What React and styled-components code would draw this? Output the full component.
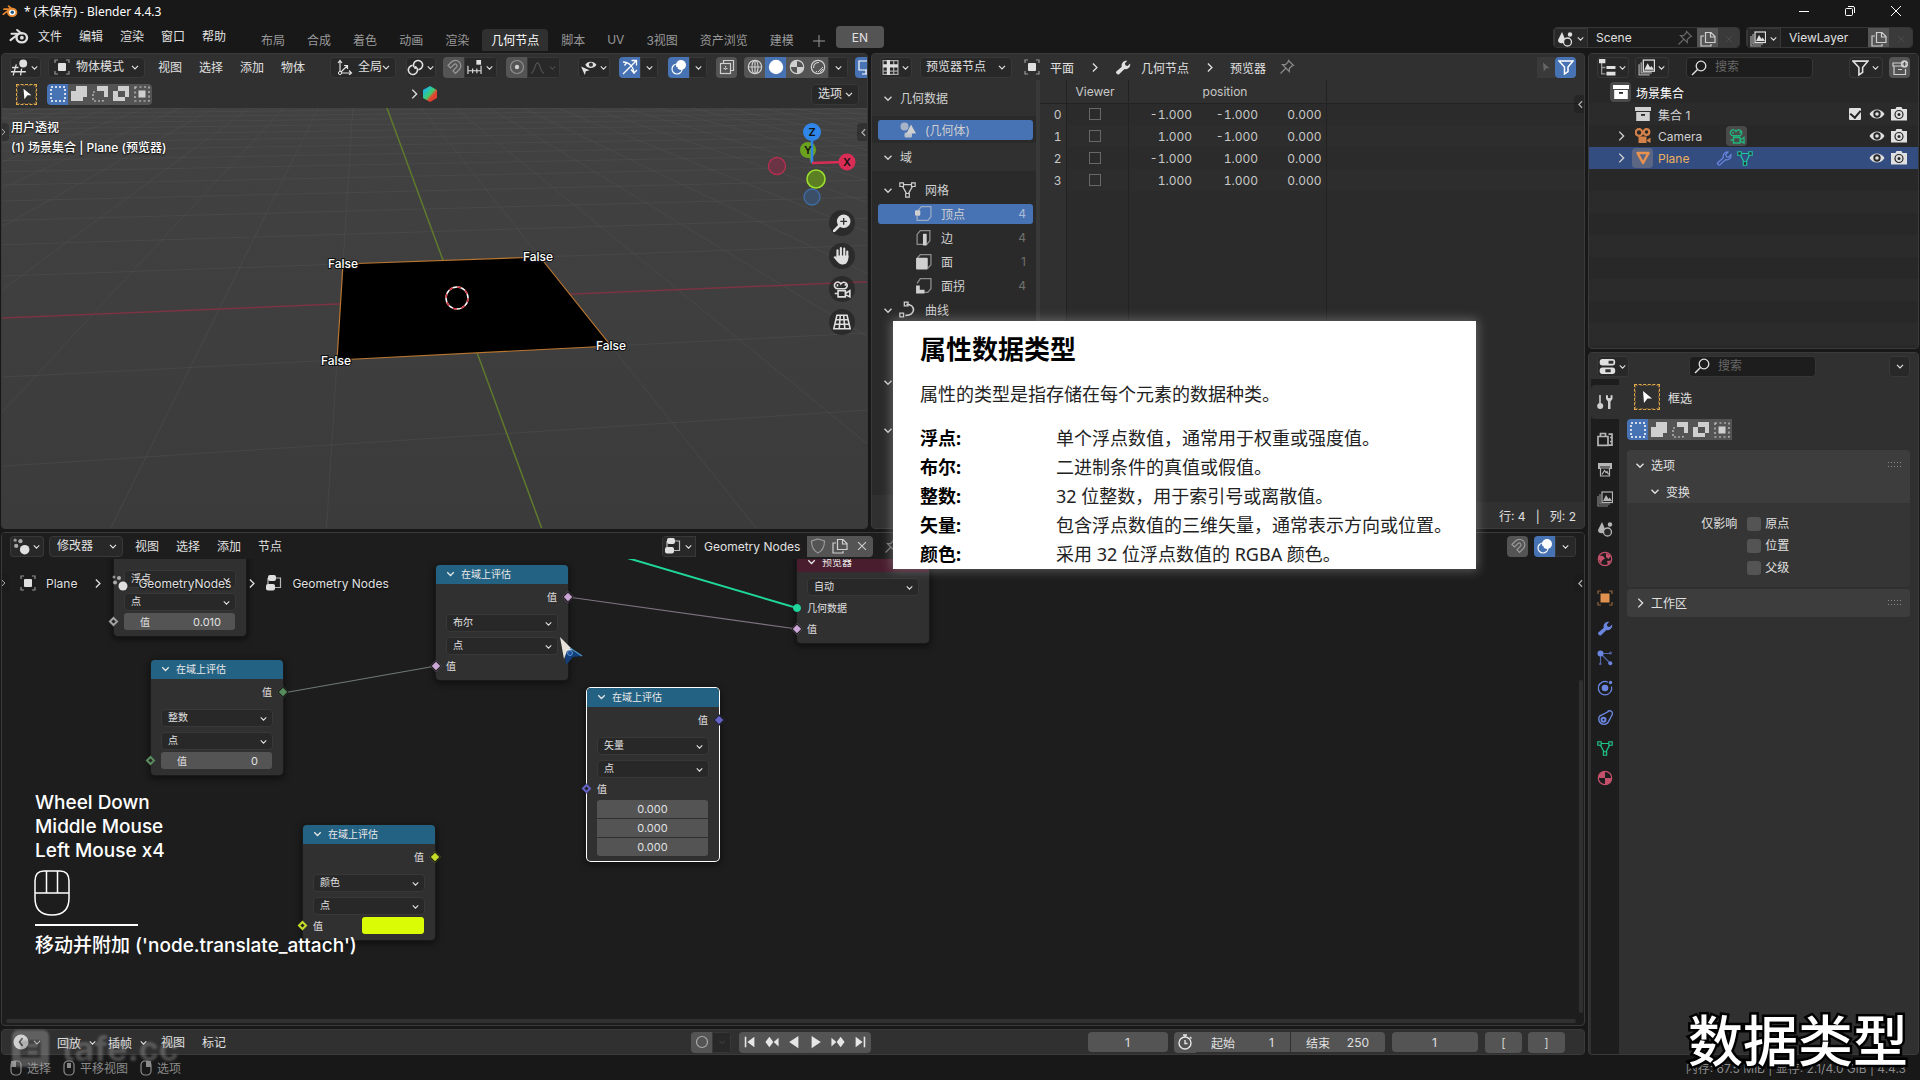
import React, { useState } from "react";
import styled, { createGlobalStyle, css } from "styled-components";

const GlobalStyle = createGlobalStyle`
    * { box-sizing: border-box; }
    body {
        margin: 0;
        background: #181818;
        overflow: hidden;
    }
    body, button, input, select {
        font-family: Inter, "Noto Sans CJK SC", sans-serif;
        font-size: 12px;
        color: #e0e0e0;
    }
`;

const box = { fill: "none", stroke: "currentColor", strokeWidth: 1.2 };

const icons = {
    down: <path d="M4 6.5l4 4 4-4" {...box} strokeWidth="1.6" />,
    right: <path d="M6 3l5 5-5 5" {...box} strokeWidth="1.6" />,
    left: <path d="M10 4L6 8l4 4" {...box} strokeWidth="1.5" />,
    blender: <>
        <path d="M6.5 3.2L10 6M2 6.2h6M1.2 11.3L7 6.8" {...box} strokeWidth="1.7" strokeLinecap="round" />
        <ellipse cx="10.2" cy="9.4" rx="4.2" ry="3.7" {...box} strokeWidth="1.9" />
        <circle cx="10.3" cy="9.3" r="1.5" fill="currentColor" />
    </>,
    blenderColor: <>
        <path d="M6.5 3.2L10 6M2 6.2h6M1.2 11.3L7 6.8" {...box} strokeWidth="1.7" strokeLinecap="round" />
        <ellipse cx="10.2" cy="9.4" rx="4.2" ry="3.7" fill="#fff" stroke="currentColor" strokeWidth="1.9" />
        <circle cx="10.3" cy="9.3" r="1.7" fill="#265787" />
    </>,
    view3d: <>
        <circle cx="11.5" cy="4.2" r="3.7" fill="currentColor" />
        <path d="M1 8h6M0 12h14M5 5L2 15.500M10 9l-1 6.500" {...box} />
    </>,
    object: <>
        <rect x="4" y="4" width="8" height="8" rx="1" fill="currentColor" />
        <path d="M1 4V1h3M12 1h3v3M15 12v3h-3M4 15H1v-3" {...box} opacity=".6" />
    </>,
    orient: <>
        <path d="M3 14V2M1 4l2-2.500L5 4M3 14h11M12 11.500l2.500 2.500-2.500 2M3 14l7-7M7 6.500h3.500V10" {...box} />
        <circle cx="3" cy="14" r="1.600" fill="#303030" stroke="currentColor" />
    </>,
    pivot: <>
        <path d="M6.500 7.500A4.300 4.300 0 1 1 10.800 10M9.500 8.500A4.300 4.300 0 1 1 5.200 6" {...box} strokeWidth="1.500" />
        <circle cx="8" cy="8" r="1.500" fill="currentColor" />
    </>,
    magnet: <path d="M2 6.500l3.500-3.500a5.200 5.200 0 0 1 7.800 7.500L9.500 14.300 7 11.800l3.500-3.600a1.800 1.800 0 0 0-2.600-2.600L4.500 9z" {...box} />,
    increment: <>
        <path d="M1 6v9M6 9v5M10.500 9v5M15 6v9M1 11.500h14" {...box} />
        <rect x="10" y="0" width="5" height="5" fill="currentColor" />
    </>,
    prop: <><circle cx="8" cy="8" r="6.500" {...box} opacity=".5" /><circle cx="8" cy="8" r="2.200" fill="currentColor" /></>,
    falloff: <path d="M1 14c4 0 4-11 7-11s3 11 7 11" {...box} />,
    eyeCursor: <>
        <path d="M5 5.500C7 1.500 13 1.500 15.500 5.500 13 9.500 7 9.500 5 5.500z" fill="currentColor" />
        <circle cx="10.300" cy="5.300" r="1.900" fill="#303030" /><path d="M1 7l8 3.500-3.500 1L4.500 15z" fill="currentColor" />
    </>,
    gizmo: <path d="M1 3c6 0 11 5 11 12M1 15L14 2M9.500 1.500h5V6.500M2.500 6.500L5 3.300M9 10.500l3 3.500 3-3" {...box} strokeWidth="1.300" />,
    overlay: <><circle cx="10" cy="6" r="5" fill="currentColor" /><circle cx="6" cy="10" r="5" {...box} /><path d="M6 8v4h4" {...box} stroke="#4772b3" /></>,
    xray: <><rect x="1.500" y="4.500" width="10" height="10" {...box} /><path d="M4.500 4.500v-3h10v10h-3" {...box} /><path d="M4.500 9.500h5M6.500 7v5" {...box} strokeDasharray="1.500 1" /></>,
    wire: <><circle cx="8" cy="8" r="6.700" {...box} /><ellipse cx="8" cy="8" rx="3" ry="6.700" {...box} /><path d="M1.500 8h13M8 1v14" {...box} /></>,
    solid: <circle cx="8" cy="8" r="7.200" fill="currentColor" />,
    material: <><circle cx="8" cy="8" r="6.700" {...box} /><path d="M8 1.300A6.700 6.700 0 0 0 1.300 8H8zM8 8v6.700A6.700 6.700 0 0 0 14.700 8z" fill="currentColor" /></>,
    rendered: <><circle cx="8" cy="8" r="6.700" {...box} /><path d="M3.500 9c0-4 3-5.500 5.500-5.500" {...box} /><path d="M8 13l5-5M10 13l3-3M6 13l1-1" {...box} strokeWidth="1" /></>,
    monitor: <path d="M1 2h14v9H1zM4 15h8M8 11v4" {...box} />,
    sheet: <><path d="M1 1.500h14v13H1zM1 11.500h14M11 2v13" {...box} opacity=".7" /><path d="M6 1v14M1 6.500h14" {...box} strokeWidth="3" /></>,
    wrench: <path d="M1.300 12.500l5.500-4.700C5.800 4.500 8.500 1 12.300 1.800L9.800 4.500l.8 2 2 .6 2.500-2.700c.8 4-2.400 6.600-5.600 5.600l-5.400 5.300C2.500 16.300.2 14 1.300 12.500z" fill="currentColor" />,
    wrenchLine: <path d="M1.800 12.700l5.500-4.900C6.500 4.500 9 1.700 12 2L9.700 4.700l.8 2 2 .6 2.400-2.600c.5 3.700-2.200 5.700-5.300 4.900L4 14.700c-1.300 1-3.200-.8-2.200-2z" {...box} />,
    pin: <path d="M9.500 1.500l5 5-1.700.5-2.500 2.500v3L3.500 5.700h3L9 3.200zM6.500 9.500L1.500 14.500" {...box} />,
    geometry: <><circle cx="4.500" cy="4.500" r="4" fill="currentColor" opacity=".7" /><path d="M11 2.500l5 9H6.500z" fill="currentColor" /><rect x="4.500" y="10.500" width="7.500" height="5" rx="1.500" fill="currentColor" opacity=".85" /></>,
    mesh: <><path d="M2.500 3.500h11L8 13.500z" {...box} /><path d="M.800 1.800h3.400v3.400H.800zM11.800 1.800h3.400v3.400h-3.400zM6.300 11.800h3.400v3.400H6.300z" fill="#282828" stroke="currentColor" strokeWidth="1.100" /></>,
    vert: <><path d="M3 5l3-3.500h9V11l-3 3.500H2V10" {...box} opacity=".6" /><rect x="0" y="5" width="5" height="5" rx="1" fill="currentColor" /></>,
    edge: <><path d="M2 5l3-3.500h9V11l-3 3.500H2z" {...box} opacity=".6" /><rect x="7.500" y="4.500" width="3.500" height="11" fill="currentColor" /></>,
    face: <><path d="M2 5l3-3.500h10V11l-3 3.500" {...box} opacity=".6" /><rect x="1" y="4.500" width="11" height="11" rx="1" fill="currentColor" /></>,
    corner: <><path d="M2 6l3-4.500h10V11l-3 3.500H9" {...box} opacity=".6" /><path d="M1 8h3.500v4H9v3.500H1z" fill="currentColor" /></>,
    curve: <><path d="M7 3c9 0 9 11-1 10.500" {...box} strokeWidth="1.500" /><path d="M5 1h3.500v3.500H5zM.800 11.500h3.500V15H.800z" {...box} /></>,
    funnel: <path d="M1 2h14L10 8v4.500L6.500 15V8z" {...box} strokeWidth="1.500" />,
    arrow: <path d="M4 2l9 7.500H8.500L5 14z" fill="currentColor" />,
    scene: <><path d="M5 1L8 8c1 5-7 6-7 1z" fill="currentColor" /><circle cx="13" cy="3.500" r="2.200" fill="currentColor" /><circle cx="10.500" cy="11" r="4" fill="#282828" stroke="currentColor" strokeWidth="1.300" /></>,
    layers: <><path d="M1 5v10h10M3 3v10h10" {...box} opacity=".7" /><rect x="5" y="1" width="10.500" height="10.500" {...box} /><path d="M6 10l3-6 2.500 4 1.200-1.500L15 10z" fill="currentColor" /></>,
    copy: <><path d="M5.500 1.500h5.500l4 4v6h-9.500zM10.500 1.500V6H15" {...box} /><path d="M4 5H1v10h10v-2" {...box} /></>,
    close: <path d="M3.500 3.500l9 9M12.500 3.500l-9 9" {...box} />,
    tree: <><path d="M2.500 3v11H6M2.500 8H6" {...box} opacity=".6" /><path d="M0 0h6v4H0zM7 6.500h8.500v3H7zM7 12h8.500v3.500H7z" fill="currentColor" /></>,
    search: <><circle cx="10" cy="6" r="4.800" {...box} strokeWidth="1.300" /><path d="M6.500 9.500L1 15" {...box} strokeWidth="1.500" /></>,
    collection: <><path d="M0 1h16v4H0zM1.200 6h13.600v9H1.200z" fill="currentColor" /><rect x="6" y="8" width="4" height="1.800" fill="#282828" /></>,
    newCollection: <><path d="M9 3H1v3h9M2 6v8.500h11.500V9M6 9.500h4" {...box} /><circle cx="12.500" cy="4" r="3.700" fill="currentColor" /><path d="M12.500 2v4M10.500 4h4" {...box} stroke="#545454" /></>,
    eye: <><path d="M.500 8C4 2 12 2 15.500 8 12 14 4 14 .500 8z" fill="currentColor" /><circle cx="8" cy="8" r="3.700" fill="#282828" /><circle cx="8" cy="8" r="1.800" fill="currentColor" /></>,
    photo: <><path d="M0 3h4.500l1-2h5l1 2H16v11.500H0z" fill="currentColor" /><circle cx="8" cy="8.500" r="4" fill="none" stroke="#282828" strokeWidth="1.200" /><circle cx="8" cy="8.500" r="1.500" fill="#282828" /></>,
    movie: <><circle cx="4" cy="4.500" r="3.300" fill="none" stroke="currentColor" strokeWidth="2.200" /><circle cx="11.500" cy="4" r="2.800" fill="none" stroke="currentColor" strokeWidth="2.200" /><path d="M3.500 8.500h8V15h-8zM12 12l3.500-2.500V15L12 13z" fill="currentColor" /></>,
    movieLine: <><path d="M4 7.800a3 3 0 1 1 3-4.300 3 3 0 1 1 3.500 4.300zM4.500 9.500h6.500V15H4.500zM11 12l4-2.500V15l-4-2M4.500 12H1.500M4 3.800v2M11 3.500v1.500" {...box} strokeWidth="1.400" /></>,
    triangle: <path d="M2.500 3h11L8 13z" fill="none" stroke="currentColor" strokeWidth="2.500" strokeLinejoin="round" />,
    props: <><rect x=".700" y="1" width="14.500" height="6" rx="2.500" fill="currentColor" /><rect x=".700" y="9" width="14.500" height="6" rx="2.500" fill="currentColor" /><path d="M9 2.700h4.500v2.600H9zM6 10.700h5v2.600H6z" fill="#303030" /></>,
    tools: <><path d="M3 1v8" {...box} strokeWidth="1.600" /><circle cx="3.200" cy="12" r="3" fill="currentColor" /><path d="M9 1v4l2 2.500V15h2.500V7.500L15.500 5V1l-2 .5V4h-2.500V1.500z" fill="currentColor" /></>,
    render: <><path d="M1 5.500h10v8.800H1zM3.500 5V2.500h5V5" {...box} strokeWidth="1.700" /><path d="M11.500 3.200H15v11h-3.500M13 6.500h1.500M13 10.500h1.500" {...box} strokeWidth="1.700" /></>,
    output: <><path d="M1 2h14v6h-2V5.500H3V8H1z" fill="currentColor" /><path d="M3.500 7h9v8h-9zM5 13.500l2.500-4 1.500 2 1-1 1.500 3" {...box} /></>,
    world: <><circle cx="8" cy="8" r="6.700" {...box} /><path d="M2 4.500l4 .5 2 2.500-3 2-1 3-2-4zM9 2l5 3-2.500 3L9 6zM10 10l4-.5-3 4.500z" fill="currentColor" /></>,
    objProp: <><rect x="3.500" y="3.500" width="9" height="9" fill="currentColor" /><path d="M1 4V1h3M12 1h3v3M15 12v3h-3M4 15H1v-3" {...box} opacity=".6" /></>,
    particles: <><path d="M3.500 3.500L13 13M3.500 3.500v10M3.500 3.500H13" {...box} opacity=".7" /><circle cx="3.500" cy="3.500" r="3" fill="currentColor" /><circle cx="13.500" cy="3" r="1.600" fill="currentColor" opacity=".6" /><circle cx="13.300" cy="13.300" r="2" fill="currentColor" /><circle cx="3.300" cy="14" r="1.300" fill="currentColor" opacity=".6" /></>,
    physics: <><circle cx="8" cy="8" r="3.300" fill="currentColor" /><path d="M11 2.200A6.700 6.700 0 1 0 14.500 6.500" {...box} /><circle cx="13.500" cy="2.500" r="1.700" fill="currentColor" /></>,
    constraint: <><path d="M10.500 2a2.700 2.700 0 0 1 4.500 3l-4 7.500A5.200 5.200 0 1 1 3 5.800z" {...box} strokeWidth="1.400" /><circle cx="6.500" cy="9.800" r="3" fill="currentColor" /><circle cx="6.500" cy="9.800" r="1" fill="#1d1d1d" /></>,
    geoNodes: <><circle cx="2" cy="2" r="1.500" fill="currentColor" opacity=".6" /><circle cx="7" cy="3" r="2" fill="currentColor" opacity=".7" /><circle cx="3" cy="7.500" r="2" fill="currentColor" opacity=".7" /><circle cx="11" cy="11" r="4.500" fill="currentColor" /></>,
    nodeTree: <><rect x="2" y="0" width="8" height="6" rx="2" fill="currentColor" /><rect x="0" y="9" width="9" height="6.500" rx="2" fill="currentColor" /><path d="M10 3h4.500v9.500H9M2 3v6" {...box} opacity=".8" /></>,
    shield: <path d="M8 1l6.500 2c0 6-1.500 9.500-6.500 12C3 12.500 1.500 9 1.500 3z" {...box} />,
    clock: <><circle cx="8" cy="8" r="7.500" fill="currentColor" /><path d="M9.500 4L6.500 8l3 4" {...box} stroke="#303030" strokeWidth="1.600" /></>,
    stopwatch: <><circle cx="8" cy="9" r="6" {...box} strokeWidth="1.400" /><path d="M6 1h4M8 1v2M13 3l1.500 1.500M8 6v3.500h2.500" {...box} strokeWidth="1.400" /></>,
    record: <circle cx="8" cy="8" r="5.500" {...box} opacity=".7" />,
    first: <path d="M2 2h1.800v12H2zM13 2v12L5 8z" fill="currentColor" />,
    prevKey: <path d="M5 2l4.500 6L5 14 .500 8zM15.500 3v10L10 8z" fill="currentColor" />,
    playBack: <path d="M13 1v14L2.500 8z" fill="currentColor" />,
    play: <path d="M3 1v14L13.500 8z" fill="currentColor" />,
    nextKey: <path d="M11 2L6.500 8l4.500 6 4.500-6zM.500 3v10L6 8z" fill="currentColor" />,
    last: <path d="M14 2h-1.800v12H14zM3 2v12l8-6z" fill="currentColor" />,
    zoom: <><circle cx="9.500" cy="6.500" r="6" fill="currentColor" /><path d="M6 10L1 15" {...box} strokeWidth="2.500" strokeLinecap="round" /><path d="M9.500 3.500v6M6.500 6.500h6" {...box} stroke="#303030" /></>,
    hand: <><path d="M4 9V3M7 8V1M10 8V1.500M12.700 9V4" {...box} strokeWidth="1.900" strokeLinecap="round" /><path d="M3 7.500h10.700c.300 5-1.500 8-5 8-3.200 0-5-2.500-8.200-6.500 1-1.200 2-.800 3 .500z" fill="currentColor" /></>,
    persp: <path d="M3.500 2h9L15.300 14H.700zM2.700 6h10.600M1.700 10h12.600M6.500 2L5.500 14M9.500 2l1 12" {...box} strokeWidth="1.400" />,
    mouseLeft: <><path d="M3 5a4 4 0 0 1 4-4h2a4 4 0 0 1 4 4v6a4 4 0 0 1-4 4H7a4 4 0 0 1-4-4z" {...box} /><path d="M3 1h5v6H3z" fill="currentColor" /></>,
    mouseMid: <><path d="M3 5a4 4 0 0 1 4-4h2a4 4 0 0 1 4 4v6a4 4 0 0 1-4 4H7a4 4 0 0 1-4-4z" {...box} /><path d="M6 3h4v5H6z" fill="currentColor" /></>,
    mouseRight: <><path d="M3 5a4 4 0 0 1 4-4h2a4 4 0 0 1 4 4v6a4 4 0 0 1-4 4H7a4 4 0 0 1-4-4z" {...box} /><path d="M8 1h5v6H8z" fill="currentColor" /></>,
    modeSet: <rect x="1" y="1" width="14" height="14" {...box} strokeWidth="1.500" strokeDasharray="2 2" />,
    modeAdd: <path d="M5 0h11v11h-4v4H0V5h5z" fill="currentColor" />,
    modeSub: <><path d="M5 0h11v11h-4V5H5z" fill="currentColor" /><path d="M3 6H1v9h10v-2" {...box} strokeDasharray="2 2" /></>,
    modeDiff: <path fillRule="evenodd" d="M5 0h11v11h-4v4H0V5h5zM5 5v6h7V5z" fill="currentColor" />,
    modeAnd: <><rect x="4.500" y="4.500" width="7" height="7" fill="currentColor" /><rect x="1" y="1" width="14" height="14" {...box} strokeDasharray="2 2.500" /></>,
};

const Svg = styled.svg`
    width: ${p => p.$size}px;
    height: ${p => p.$size}px;
    color: ${p => p.$color || "inherit"};
    flex: none;
    display: block;
`;

const Icon = ({ name, size = 16, color, ...rest }) =>
    <Svg viewBox="0 0 16 16" $size={size} $color={color} aria-hidden="true" {...rest}>{icons[name]}</Svg>

/* ---------- shell ---------- */

const Screen = styled.div`
    position: relative;
    height: 100vh;
    display: flex;
    flex-direction: column;
    background: #181818;
    overflow: hidden;
`;

const TitleBar = styled.div`
    height: 24px;
    display: flex;
    align-items: center;
    gap: 6px;
    padding: 0 16px 2px 2px;
    font-family: "Noto Sans", "Noto Sans CJK SC", sans-serif;
    color: #fff;
`;

const WindowButtons = styled.div`
    margin-left: auto;
    display: flex;
    gap: 30px;
`;

const PlainButton = styled.button`
    border: 0;
    background: none;
    padding: 0;
    margin: ${p => p.$margin || "0"};
    gap: ${p => p.$gap || 0}px;
    display: flex;
    align-items: center;
    justify-content: center;
    flex: none;
    white-space: nowrap;
`;

const TopBar = styled.header`
    height: 29px;
    display: flex;
    padding: 0 7px 0 9px;
    white-space: nowrap;
`;

const MenuBar = styled.nav`
    display: flex;
    align-items: center;
    gap: 1px;
    height: 24px;
    margin-left: ${p => p.$ml || 0}px;
    flex: none;
`;

const MenuButton = styled(PlainButton)`
    padding: 0 8px 2px;
    height: 20px;
`;

const Tabs = styled.div`
    display: flex;
    gap: 4px;
    margin: 5px 0 0 18px;
    height: 22px;
`;

const Tab = styled(PlainButton)`
    padding: 0 9px 2px;
    border-radius: 4px 4px 0 0;
    color: ${p => p.$active ? "#fff" : "#989898"};
    background: ${p => p.$active ? "#303030" : "transparent"};
`;

const LangButton = styled(PlainButton)`
    width: 48px;
    height: 22px;
    margin: 2px 0 0 11px;
    border-radius: 4px;
    background: #545454;
`;

const IdBlock = styled.div`
    display: flex;
    height: 21px;
    margin: 3px 0 0 ${p => p.$ml || 0}px;
    border: 1px solid #363636;
    border-radius: 4px;
    overflow: hidden;
    flex: none;
`;

const IdField = styled.label`
    display: flex;
    align-items: center;
    width: ${p => p.$width}px;
    background: #1d1d1d;
    padding: 0 4px 0 8px;

    input {
        flex: 1;
        min-width: 0;
        width: 100%;
        border: 0;
        padding: 0;
        background: none;
        outline: 0;
    }
`;

const Workspace = styled.main`
    flex: 1;
    min-height: 0;
    display: grid;
    grid-template-columns: minmax(0, 1fr) 331px;
    gap: 3px;
    padding: 0 1px;
`;

const Rows = styled.div`
    display: grid;
    min-height: 0;
    min-width: 0;
    grid-template-rows: ${p => p.$rows};
    gap: 3px;
`;

const UpperRow = styled.div`
    display: grid;
    grid-template-columns: minmax(0, 867fr) minmax(0, 714fr);
    gap: 3px;
    min-height: 0;
`;

const Area = styled.section`
    display: flex;
    flex-direction: column;
    min-width: 0;
    min-height: 0;
    background: ${p => p.$bg || "#303030"};
    border: 1px solid #3a3a3a;
    border-radius: 4px;
    overflow: hidden;
`;

const AreaHeader = styled.div`
    display: flex;
    align-items: center;
    flex: none;
    height: ${p => p.$height || 26}px;
    padding: 0 8px;
    background: ${p => p.$bg || "#303030"};
    white-space: nowrap;
    overflow: hidden;
`;

const Spacer = styled.div`
    flex: 1;
    min-width: ${p => p.$min || 0}px;
`;

const Group = styled.div`
    display: flex;
    align-items: center;
    flex: none;
    margin-left: ${p => p.$ml || 0}px;
    border-radius: 4px;
    overflow: hidden;
`;

const tones = {
    dark: css`background: #282828; box-shadow: inset 0 0 0 1px #383838;`,
    grey: css`background: #545454; color: #cfcfcf;`,
    dim: css`background: #3a3a3a; color: #4c4c4c;`,
    blue: css`background: #4772b3; color: #fff;`,
    none: css`background: none;`,
};

const Tool = styled(PlainButton)`
    width: ${p => p.$width || 21}px;
    height: 21px;
    gap: ${p => p.$gap || 2}px;
    margin-left: ${p => p.$ml || 0}px;
    border-radius: ${p => p.$round ? 4 : 0}px;
    ${p => tones[p.$tone || "dark"]}
`;

const SelectBox = styled.label`
    position: relative;
    display: flex;
    align-items: center;
    flex: none;
    width: ${p => p.$width ? p.$width + "px" : "auto"};
    height: ${p => p.$height || 21}px;
    margin-left: ${p => p.$ml || 0}px;
    padding-left: ${p => p.$pad || 6}px;
    background: #282828;
    border: 1px solid #383838;
    border-radius: 4px;

    select {
        appearance: none;
        flex: 1;
        min-width: 0;
        height: 100%;
        border: 0;
        background: none;
        padding: 0 0 2px ${p => p.$inner || 0}px;
        outline: 0;
        font-size: ${p => p.$font || 12}px;
    }

    svg:last-child {
        position: absolute;
        right: 3px;
        pointer-events: none;
    }
`;

const Dropdown = ({ value, label, icon, chevron = 12, ...rest }) =>
    <SelectBox {...rest}>
        {icon && <Icon name={icon} />}
        <select aria-label={label} defaultValue={value}><option>{value}</option></select>
        <Icon name="down" size={chevron} />
    </SelectBox>

const EditorButton = ({ icon, label, width = 32, ml }) =>
    <Tool $width={width} $gap={1} $ml={ml} $round aria-label={label}>
        <Icon name={icon} size={17} /><Icon name="down" size={11} />
    </Tool>

const SearchBox = styled.label`
    display: flex;
    align-items: center;
    gap: 8px;
    width: 127px;
    height: 21px;
    margin-left: ${p => p.$ml}px;
    padding-left: 4px;
    background: #1d1d1d;
    border: 1px solid #363636;
    border-radius: 4px;
    flex: none;

    input {
        width: 80px;
        border: 0;
        background: none;
        padding: 0 0 2px;
        outline: 0;
    }
    input::placeholder { color: #666; }
`;

const SelectTool = styled(PlainButton)`
    width: ${p => p.$size}px;
    height: ${p => p.$size}px;
    margin-left: ${p => p.$ml || 0}px;
    border: 1px dashed #e0a94a;
    outline: 1px dashed rgba(224, 169, 74, 0.4);
    outline-offset: -2px;
    color: #fff;
`;

const modes = ["modeSet", "modeAdd", "modeSub", "modeDiff", "modeAnd"];

const SelectModes = ({ ml }) => {
    const [mode, setMode] = useState("modeSet")
    return <Group $ml={ml}>
        {modes.map(item =>
            <Tool key={item} $tone={item === mode ? "blue" : "grey"} aria-label={item} onClick={() => setMode(item)}>
                <Icon name={item} />
            </Tool>
        )}
    </Group>
}

/* ---------- 3D viewport ---------- */

const Scene = styled.div`
    position: relative;
    flex: 1;
    min-height: 0;
    background: linear-gradient(#424242, #3b3b3b);
    overflow: hidden;
`;

const SceneSvg = styled.svg`
    position: absolute;
    inset: 0;
    width: 100%;
    height: 100%;
`;

const SceneInfo = styled.div`
    position: absolute;
    left: 9px;
    top: 10px;
    line-height: 20px;
    font-weight: 500;
    color: #fff;
    text-shadow: 0 1px 2px #000;
`;

const Gizmo = styled.svg`
    position: absolute;
    right: 6px;
    top: 10px;
    width: 96px;
    height: 92px;
    font-size: 11px;
    font-weight: 600;
`;

const NavButtons = styled.div`
    position: absolute;
    right: 12px;
    top: 102px;
    display: flex;
    flex-direction: column;
    gap: 7px;
`;

const NavButton = styled(PlainButton)`
    width: 26px;
    height: 26px;
    border-radius: 50%;
    background: rgba(30, 30, 30, 0.6);
`;

const EdgeHandle = styled(PlainButton)`
    position: absolute;
    top: ${p => p.$top}px;
    ${p => p.$left ? "left: -6px;" : "right: -3px;"}
    width: 13px;
    height: 18px;
    border-radius: 4px;
    background: rgba(24, 24, 24, 0.4);
    color: #b0b0b0;
`;

// screen corners of the plane: (-1,-1) (1,-1) (1,1) (-1,1)
const quad = [[335, 252], [609, 238], [538, 149], [341, 156]];

const makeProjection = ([[x0, y0], [x1, y1], [x2, y2], [x3, y3]]) => {
    const sx = x0 - x1 + x2 - x3
    const sy = y0 - y1 + y2 - y3
    const det = (x1 - x2) * (y3 - y2) - (x3 - x2) * (y1 - y2)
    const g = (sx * (y3 - y2) - (x3 - x2) * sy) / det
    const h = ((x1 - x2) * sy - sx * (y1 - y2)) / det
    const depth = (x, y) => g * (x + 1) / 2 + h * (y + 1) / 2 + 1
    const point = (x, y) => {
        const u = (x + 1) / 2
        const v = (y + 1) / 2
        const w = depth(x, y)
        return [
            ((x1 - x0 + g * x1) * u + (x3 - x0 + h * x3) * v + x0) / w,
            ((y1 - y0 + g * y1) * u + (y3 - y0 + h * y3) * v + y0) / w,
        ]
    }
    return { depth, point }
}

const { depth, point } = makeProjection(quad);

const segment = (a, b) => {
    const near = 0.15
    const da = depth(...a)
    const db = depth(...b)
    if (da < near && db < near) return ""
    const cut = (from, to, df, dt) => {
        const t = (near - df) / (dt - df)
        return [from[0] + (to[0] - from[0]) * t, from[1] + (to[1] - from[1]) * t]
    }
    const p = point(...(da < near ? cut(a, b, da, db) : a))
    const q = point(...(db < near ? cut(b, a, db, da) : b))
    return `M${p[0].toFixed(1)} ${p[1].toFixed(1)}L${q[0].toFixed(1)} ${q[1].toFixed(1)}`
}

const range = [...Array(41).keys()].map(i => i - 20).filter(i => i !== 0);
const gridPath = range.map(i => segment([i, -40], [i, 60]) + segment([-60, i], [60, i])).join("");

const falseLabels = [[341, 155], [536, 148], [609, 237], [334, 252]];

const Viewport = () =>
    <Area>
        <AreaHeader>
            <EditorButton icon="view3d" label="编辑器类型" width={31} />
            <Dropdown value="物体模式" label="模式" icon="object" $width={97} $ml={7} $pad={5} $inner={6} />
            <MenuBar $ml={5}>
                {["视图", "选择", "添加", "物体"].map(item => <MenuButton key={item}>{item}</MenuButton>)}
            </MenuBar>
            <Dropdown value="全局" label="坐标系" icon="orient" $width={66} $ml={17} $inner={5} />
            <EditorButton icon="pivot" label="轴心点" width={30} ml={10} />
            <Group $ml={7}>
                <Tool $tone="grey" aria-label="吸附"><Icon name="magnet" color="#999" /></Tool>
                <Tool $width={33} aria-label="吸附到"><Icon name="increment" size={15} /><Icon name="down" size={11} /></Tool>
            </Group>
            <Group $ml={9}>
                <Tool $tone="grey" aria-label="衰减编辑"><Icon name="prop" /></Tool>
                <Tool $width={33} aria-label="衰减"><Icon name="falloff" size={15} color="#555" /><Icon name="down" size={11} color="#484848" /></Tool>
            </Group>
            <EditorButton icon="eyeCursor" label="可见性" ml={18} />
            <Group $ml={9}>
                <Tool $tone="blue" aria-label="Gizmo"><Icon name="gizmo" /></Tool>
                <Tool $width={18} aria-label="Gizmo 选项"><Icon name="down" size={11} /></Tool>
            </Group>
            <Group $ml={10}>
                <Tool $tone="blue" aria-label="叠加层"><Icon name="overlay" /></Tool>
                <Tool $width={18} aria-label="叠加层选项"><Icon name="down" size={11} /></Tool>
            </Group>
            <Tool $tone="grey" $ml={9} $round aria-label="透视"><Icon name="xray" /></Tool>
            <Group $ml={7}>
                {["wire", "solid", "material", "rendered"].map(item =>
                    <Tool key={item} $tone={item === "solid" ? "blue" : "grey"} aria-label={item}><Icon name={item} /></Tool>
                )}
                <Tool $width={20} aria-label="着色"><Icon name="down" size={11} /></Tool>
            </Group>
            <Tool $tone="blue" $ml={7} $round aria-label="屏幕"><Icon name="monitor" /></Tool>
        </AreaHeader>
        <AreaHeader $height={28}>
            <SelectTool $size={21} $ml={6} aria-label="框选"><Icon name="arrow" size={14} /></SelectTool>
            <SelectModes ml={10} />
            <Group $ml={255}>
                <Icon name="right" size={14} />
                <svg width="18" height="18" viewBox="0 0 18 18">
                    <defs>
                        <linearGradient id="cube" x1="0" y1="0" x2="1" y2="1">
                            <stop offset=".15" stopColor="#18b8e8" /><stop offset=".5" stopColor="#3fce6a" /><stop offset=".65" stopColor="#e5452f" /><stop offset="1" stopColor="#d83a28" />
                        </linearGradient>
                    </defs>
                    <path d="M9 1l7 4v8l-7 4-7-4V5z" fill="url(#cube)" />
                </svg>
            </Group>
            <Spacer />
            <Dropdown value="选项" label="选项" $width={48} />
        </AreaHeader>
        <Scene>
            <SceneSvg viewBox="0 0 865 420" preserveAspectRatio="xMidYMid slice">
                <path d={gridPath} fill="none" stroke="#555" strokeWidth="1" opacity=".4" />
                <path d={segment([-60, 0], [60, 0])} stroke="#7b3443" strokeWidth="1.500" />
                <path d={segment([0, -40], [0, 60])} stroke="#5f7a2c" strokeWidth="1.500" />
                <polygon points={quad.map(p => p.join(",")).join(" ")} fill="#000" stroke="#b8752f" strokeWidth="1.200" />
                <circle cx="455" cy="190" r="11" fill="none" stroke="#fff" strokeWidth="1.500" />
                <circle cx="455" cy="190" r="11" fill="none" stroke="#d2353f" strokeWidth="1.500" strokeDasharray="4.300 4.300" />
                <g fill="#fff" stroke="#111" strokeWidth="2" paintOrder="stroke" fontSize="12" fontWeight="500" textAnchor="middle">
                    {falseLabels.map(([x, y]) => <text key={x} x={x} y={y + 5}>False</text>)}
                </g>
            </SceneSvg>
            <SceneInfo>
                <div>用户透视</div>
                <div>(1) 场景集合 | Plane (预览器)</div>
            </SceneInfo>
            <Gizmo viewBox="0 0 96 92" textAnchor="middle">
                <circle cx="12" cy="48" r="8.500" fill="#6b3444" stroke="#b62f50" strokeWidth="1.300" />
                <circle cx="47" cy="79" r="8" fill="#3b5068" stroke="#3d6ea8" strokeWidth="1.300" />
                <circle cx="43" cy="32" r="8" fill="#6aa11f" />
                <path d="M47 45l-3-10" stroke="#6aa11f" strokeWidth="2" />
                <path d="M47 45V20" stroke="#2f86e8" strokeWidth="2.500" />
                <path d="M47 45l32-1" stroke="#d92d55" strokeWidth="2.500" />
                <circle cx="47" cy="14" r="9" fill="#2f86e8" />
                <circle cx="82" cy="44" r="8.500" fill="#d92d55" />
                <circle cx="51" cy="61" r="9" fill="#5d7f24" stroke="#9be02a" strokeWidth="1.600" />
                <g fill="#111"><text x="47" y="18">Z</text><text x="82" y="48">X</text><text x="43" y="36">Y</text></g>
            </Gizmo>
            <NavButtons>
                {["zoom", "hand", "movieLine", "persp"].map(item =>
                    <NavButton key={item} aria-label={item}><Icon name={item} size={18} /></NavButton>
                )}
            </NavButtons>
            <EdgeHandle $top={15} aria-label="侧栏"><Icon name="left" size={13} /></EdgeHandle>
            <EdgeHandle $top={15} $left aria-label="工具栏"><Icon name="right" size={10} /></EdgeHandle>
        </Scene>
    </Area>

/* ---------- spreadsheet ---------- */

const Crumbs = styled.div`
    display: flex;
    align-items: center;
    gap: 14px;
    margin-left: ${p => p.$ml || 0}px;
    flex: none;
`;

const Crumb = styled.span`
    display: flex;
    align-items: center;
    gap: ${p => p.$gap || 10}px;
`;

const SheetBody = styled.div`
    position: relative;
    flex: 1;
    min-height: 0;
    display: flex;
`;

const SheetSide = styled.aside`
    width: 168px;
    flex: none;
    background: #303030;
    border-right: 4px solid #393939;
    overflow: hidden;
`;

const SideTitle = styled.div`
    display: flex;
    align-items: center;
    gap: 5px;
    height: ${p => p.$height}px;
    padding: 0 0 1px 9px;
    color: #d0d0d0;
`;

const SideList = styled.ul`
    list-style: none;
    margin: 0;
    padding: ${p => p.$pad}px 3px 3px 6px;
    background: #2a2a2a;
`;

const SideRow = styled.li`
    display: flex;
    align-items: center;
    height: 20px;
    margin: 2px 0 ${p => p.$last ? 0 : 4}px;
    gap: 9px;
    padding: 0 7px 1px ${p => p.$indent}px;
    border-radius: 3px;
    color: #d0d0d0;
    background: ${p => p.$active ? "#4772b3" : "transparent"};
`;

const Twisty = styled.span`
    margin-right: -5px;
`;

const Count = styled.span`
    margin-left: auto;
    color: ${p => p.$active ? "#a9bbd6" : "#707070"};
`;

const domains = [
    { open: true, icon: "mesh", label: "网格" },
    { icon: "vert", label: "顶点", count: 4, active: true },
    { icon: "edge", label: "边", count: 4 },
    { icon: "face", label: "面", count: 1 },
    { icon: "corner", label: "面拐", count: 4 },
    { open: true, icon: "curve", label: "曲线" },
    {}, {}, { open: true }, {}, { open: true }, {}, {},
];

const TableWrap = styled.div`
    flex: 1;
    display: flex;
    background: #2b2b2b;
`;

const Table = styled.table`
    width: 100%;
    height: 100%;
    table-layout: fixed;
    border-collapse: collapse;
    font-variant-numeric: tabular-nums;
    color: #c8c8c8;

    th { font-weight: 400; padding: 0 4px 0 0; }
    td { padding: 0 2px 0 0; text-align: right; }
    thead tr { height: 23px; background: #303030; border-bottom: 1px solid #222; }
    tbody tr { height: 22px; }
    tbody tr:nth-child(even) { background: #2d2d2d; }
    tbody tr:last-child { height: auto; background: none; }
    tbody th { background: #303030; text-align: right; }
    .edge { border-right: 1px solid #222; }
    td.edge { padding-right: 4px; }
    td.center { text-align: center; }
    input {
        appearance: none;
        display: block;
        width: 12px;
        height: 12px;
        margin: 0 auto;
        border: 1px solid #686868;
    }
`;

const IndexCol = styled.col` width: 26px; `;
const ViewerCol = styled.col` width: 62px; `;
const NumberCol = styled.col` width: 66px; `;

const positions = [
    ["-1.000", "-1.000", "0.000"],
    ["1.000", "-1.000", "0.000"],
    ["-1.000", "1.000", "0.000"],
    ["1.000", "1.000", "0.000"],
];

const Spreadsheet = () =>
    <Area>
        <AreaHeader>
            <EditorButton icon="sheet" label="编辑器类型" />
            <Dropdown value="预览器节点" label="对象" $width={92} $ml={8} $pad={5} />
            <Crumbs $ml={12}>
                <Crumb><Icon name="object" />平面</Crumb>
                <Icon name="right" size={13} />
                <Crumb><Icon name="wrench" />几何节点</Crumb>
                <Icon name="right" size={13} />
                <Crumb $gap={13}>预览器<Icon name="pin" color="#8a8a8a" /></Crumb>
            </Crumbs>
            <Spacer />
            <Tool $tone="dim" $width={18} aria-label="仅选中项"><Icon name="arrow" size={12} color="#666" /></Tool>
            <Tool $tone="blue" $round aria-label="过滤"><Icon name="funnel" /></Tool>
        </AreaHeader>
        <SheetBody>
            <SheetSide>
                <SideTitle $height={36}><Icon name="down" size={14} />几何数据</SideTitle>
                <SideList $pad={2}>
                    <SideRow $active $last $indent={22}><Icon name="geometry" /><Crumb>(几何体)</Crumb></SideRow>
                </SideList>
                <SideTitle $height={28}><Icon name="down" size={14} />域</SideTitle>
                <SideList $pad={7}>
                    {domains.map((item, i) =>
                        <SideRow key={i} $indent={item.open ? 3 : 37} $active={item.active}>
                            {item.open && <Twisty><Icon name="down" size={14} /></Twisty>}
                            {item.icon && <Icon name={item.icon} size={17} />}
                            {item.label}
                            {item.count && <Count $active={item.active}>{item.count}</Count>}
                        </SideRow>
                    )}
                </SideList>
            </SheetSide>
            <TableWrap>
                <Table>
                    <colgroup>
                        <IndexCol /><ViewerCol />
                        <NumberCol /><NumberCol /><NumberCol />
                        <col />
                    </colgroup>
                    <thead>
                        <tr>
                            <td className="edge" />
                            <th className="edge">Viewer</th>
                            <th className="edge" colSpan="3">position</th>
                            <td />
                        </tr>
                    </thead>
                    <tbody>
                        {positions.map((row, i) =>
                            <tr key={i}>
                                <th className="edge">{i}</th>
                                <td className="edge center"><input type="checkbox" aria-label={`Viewer ${i}`} /></td>
                                <td>{row[0]}</td>
                                <td>{row[1]}</td>
                                <td className="edge">{row[2]}</td>
                                <td />
                            </tr>
                        )}
                        <tr><th className="edge" /><td className="edge" /><td /><td /><td className="edge" /><td /></tr>
                    </tbody>
                </Table>
            </TableWrap>
            <EdgeHandle $top={15} aria-label="侧栏"><Icon name="left" size={13} /></EdgeHandle>
        </SheetBody>
        <AreaHeader><Spacer />行: 4 &nbsp; | &nbsp; 列: 2</AreaHeader>
    </Area>

/* ---------- node editor ---------- */

const Canvas = styled.div`
    position: relative;
    flex: 1;
    min-height: 0;
    overflow: hidden;
    font-size: 10px;
`;

const Links = styled.svg`
    position: absolute;
    left: 0;
    top: 0;
    width: 100%;
    height: 100%;
`;

const NodeBox = styled.div`
    position: absolute;
    left: ${p => p.$x}px;
    top: ${p => p.$y}px;
    width: 132px;
    padding-bottom: 5px;
    background: #303030;
    border-radius: 4px;
    box-shadow: 0 0 0 1px ${p => p.$selected ? "#fff" : "#1a1a1a"}, 0 2px 6px 2px rgba(0, 0, 0, 0.45);
`;

const NodeHead = styled.div`
    display: flex;
    align-items: center;
    gap: 4px;
    height: 19px;
    padding: 0 0 2px 8px;
    border-radius: 4px 4px 0 0;
    background: ${p => p.$color};
    color: #e8e8e8;
`;

const NodeRow = styled.div`
    position: relative;
    display: flex;
    align-items: center;
    justify-content: ${p => p.$out ? "flex-end" : "space-between"};
    height: ${p => p.$height || 18}px;
    margin-top: ${p => p.$mt || 0}px;
    padding: 0 11px 1px 10px;
`;

const Socket = styled.i`
    position: absolute;
    ${p => p.$out ? "right: -4px;" : "left: -4px;"}
    top: calc(50% - 4px);
    width: 8px;
    height: 8px;
    background: ${p => p.$color};
    border: 1px solid ${p => p.$round ? p.$color : "#181818"};
    transform: ${p => p.$round ? "none" : "rotate(45deg)"};
    border-radius: ${p => p.$round ? "50%" : "0"};
    ${p => p.$dot && css`
        width: 7px;
        height: 7px;
        background: #222;
        border: 2px solid ${p.$color};
    `}
`;

const NodeSelects = styled.div`
    display: grid;
    gap: 5px;
    margin: ${p => p.$mt}px 10px 2px;
`;

const NumberField = styled.label`
    display: flex;
    flex: 1;
    align-items: center;
    justify-content: space-between;
    height: 17px;
    padding: 0 14px 0 16px;
    background: #545454;
    border-radius: 3px;

    input {
        width: 50px;
        border: 0;
        padding: 0;
        background: none;
        text-align: right;
        font-size: 11px;
    }
`;

const VectorFields = styled.div`
    display: grid;
    gap: 1px;
    margin: 2px 11px 0 10px;
    border-radius: 3px;
    overflow: hidden;

    input {
        width: 100%;
        height: 18px;
        border: 0;
        padding: 0;
        background: #545454;
        text-align: center;
        font-size: 11px;
    }
`;

const Swatch = styled.button`
    width: 62px;
    height: 17px;
    border: 0;
    border-radius: 3px;
    background: #dafd05;
`;

const EvaluateNode = ({ type, color, linked, x, y, selected, children }) =>
    <NodeBox $x={x} $y={y} $selected={selected}>
        <NodeHead $color="#246283"><Icon name="down" size={13} />在域上评估</NodeHead>
        <NodeRow $out $height={26}>值<Socket $out $color={color} /></NodeRow>
        <NodeSelects $mt={4}>
            <Dropdown value={type} label="数据类型" $height={18} $font={10} chevron={11} />
            <Dropdown value="点" label="域" $height={18} $font={10} chevron={11} />
        </NodeSelects>
        {children || <NodeRow>值<Socket $color={color} $dot={!linked} /></NodeRow>}
    </NodeBox>

const ValueRow = ({ color, value }) =>
    <NodeRow>
        <NumberField>值<input aria-label="值" defaultValue={value} /></NumberField>
        <Socket $color={color} $dot />
    </NodeRow>

const NodePath = styled.div`
    position: absolute;
    left: 18px;
    top: 14px;
    height: 20px;
    display: flex;
    align-items: center;
    gap: 8px;
    font-size: 12px;
    text-shadow: 0 1px 2px #000;

    span { padding-right: 6px; }
`;

const Keys = styled.div`
    position: absolute;
    left: 33px;
    top: 232px;
    font-size: 19px;
    font-weight: 500;
    line-height: 24px;
    color: #fff;

    svg { display: block; margin: 7px 0 8px -1px; }
    hr { width: 103px; height: 2px; margin: 0 0 8px; border: 0; background: #fff; }
`;

const Pointer = styled.svg`
    position: absolute;
    left: 556px;
    top: 77px;
    width: 28px;
    height: 30px;
`;

const ScrollV = styled.div`
    position: absolute;
    right: 1px;
    top: 121px;
    bottom: 12px;
    width: 4px;
    border-radius: 2px;
    background: #303030;
`;

const ScrollH = styled.div`
    position: absolute;
    left: 4px;
    right: 8px;
    bottom: 2px;
    height: 4px;
    border-radius: 2px;
    background: #303030;
`;

const NodeEditor = () =>
    <Area $bg="#1d1d1d">
        <AreaHeader $bg="#1d1d1d">
            <EditorButton icon="geoNodes" label="编辑器类型" width={34} />
            <Dropdown value="修改器" label="节点树类型" $width={74} $ml={5} $pad={7} />
            <MenuBar $ml={4}>
                {["视图", "选择", "添加", "节点"].map(item => <MenuButton key={item}>{item}</MenuButton>)}
            </MenuBar>
            <Spacer />
            <Group>
                <Tool $width={34} aria-label="浏览节点树"><Icon name="nodeTree" /><Icon name="down" size={11} /></Tool>
                <IdField $width={111}><input aria-label="节点树名称" defaultValue="Geometry Nodes" /></IdField>
                <Tool $tone="grey" $width={22} aria-label="伪用户"><Icon name="shield" color="#999" /></Tool>
                <Tool $tone="grey" $width={22} aria-label="新建节点树"><Icon name="copy" /></Tool>
                <Tool $tone="grey" $width={22} aria-label="断开"><Icon name="close" size={14} /></Tool>
            </Group>
            <Tool $ml={8} $tone="none" aria-label="固定"><Icon name="pin" color="#777" /></Tool>
            <Spacer $min={605} />
            <Tool $tone="grey" $round aria-label="吸附"><Icon name="magnet" color="#999" /></Tool>
            <Group $ml={6}>
                <Tool $tone="blue" aria-label="叠加层"><Icon name="overlay" /></Tool>
                <Tool aria-label="叠加层选项"><Icon name="down" size={11} /></Tool>
            </Group>
        </AreaHeader>
        <Canvas>
            <Links fill="none">
                <path d="M281 134L434 107" stroke="#6f7a72" strokeWidth="1.200" />
                <path d="M566 38L795 70" stroke="#7d7280" strokeWidth="1.200" />
                <path d="M622 -2L795 49" stroke="#1fd69b" strokeWidth="2" />
            </Links>
            <EvaluateNode type="浮点" x={112} y={-38} color="#a1a1a1"><ValueRow color="#a1a1a1" value="0.010" /></EvaluateNode>
            <EvaluateNode type="整数" x={149} y={101} color="#598c5c"><ValueRow color="#598c5c" value="0" /></EvaluateNode>
            <EvaluateNode type="布尔" x={434} y={6} color="#cca6d6" linked />
            <EvaluateNode type="矢量" x={585} y={129} color="#6363c7" selected>
                <NodeRow>值<Socket $color="#6363c7" $dot /></NodeRow>
                <VectorFields>
                    {["X", "Y", "Z"].map(axis => <input key={axis} aria-label={axis} defaultValue="0.000" />)}
                </VectorFields>
            </EvaluateNode>
            <EvaluateNode type="颜色" x={301} y={266} color="#c7dc29">
                <NodeRow>值<Swatch aria-label="颜色" /><Socket $color="#c7dc29" $dot /></NodeRow>
            </EvaluateNode>
            <NodeBox $x={795} $y={-6}>
                <NodeHead $color="#4a1d2e"><Icon name="down" size={13} />预览器</NodeHead>
                <NodeSelects $mt={6}><Dropdown value="自动" label="域" $height={18} $font={10} chevron={11} /></NodeSelects>
                <NodeRow $height={19}>几何数据<Socket $color="#1fd69b" $round /></NodeRow>
                <NodeRow $height={19} $mt={2}>值<Socket $color="#cca6d6" /></NodeRow>
            </NodeBox>
            <NodePath>
                <Crumb><Icon name="object" />Plane</Crumb>
                <Icon name="right" size={13} />
                <Crumb><Icon name="geoNodes" />GeometryNodes</Crumb>
                <Icon name="right" size={13} />
                <Crumb><Icon name="nodeTree" />Geometry Nodes</Crumb>
            </NodePath>
            <Keys>
                <div>Wheel Down</div>
                <div>Middle Mouse</div>
                <div>Left Mouse x4</div>
                <svg width="36" height="46" viewBox="0 0 36 46" fill="none" stroke="#fff" strokeWidth="1.500">
                    <path d="M1 11Q1 1 10 1h16q9 0 9 10v17Q35 45 18 45T1 28zM1 23h34M12.500 1v22M23.500 1v22" />
                </svg>
                <hr />
                <div>移动并附加 ('node.translate_attach')</div>
            </Keys>
            <Pointer viewBox="0 0 28 30">
                <path d="M6 10l18 10-9 1-7 8z" fill="#123f7a" />
                <path d="M2 1l13 13-6 1-3 8z" fill="#e8e4da" />
                <path d="M12 12l12 8" stroke="#4b93c9" strokeWidth="1.300" />
                <circle cx="12" cy="17" r="2.500" fill="#1a4f94" stroke="#5f8fd0" />
            </Pointer>
            <EdgeHandle $top={15} aria-label="侧栏"><Icon name="left" size={13} /></EdgeHandle>
            <EdgeHandle $top={15} $left aria-label="工具栏"><Icon name="right" size={10} /></EdgeHandle>
            <ScrollV />
            <ScrollH />
        </Canvas>
    </Area>

/* ---------- timeline ---------- */

const TimelineHeader = styled(AreaHeader)`
    display: grid;
    grid-template-columns: 1fr auto 1fr;
`;

const TimelinePart = styled.div`
    display: flex;
    align-items: center;
    justify-content: ${p => p.$end ? "flex-end" : "flex-start"};
    padding: 0 ${p => p.$pr || 0}px 0 ${p => p.$pl || 0}px;
`;

const TimeField = styled.label`
    display: flex;
    align-items: center;
    justify-content: space-between;
    width: ${p => p.$width}px;
    height: 20px;
    margin-left: ${p => p.$ml || 0}px;
    padding: 0 16px 0 15px;
    flex: none;
    background: #545454;
    border-radius: ${p => p.$flat ? 0 : 4}px;

    input {
        flex: 1;
        width: 30px;
        min-width: 0;
        border: 0;
        padding: 0;
        background: none;
        text-align: ${p => p.$flat ? "right" : "center"};
    }
`;

const Timeline = () =>
    <Area>
        <TimelineHeader $height={24}>
            <TimelinePart $pl={3}>
                <PlainButton $gap={2} aria-label="编辑器类型"><Icon name="clock" /><Icon name="down" size={12} /></PlainButton>
                <PlainButton $gap={6} $margin="0 0 0 14px">回放<Icon name="down" size={11} /></PlainButton>
                <PlainButton $gap={6} $margin="0 0 0 10px">插帧<Icon name="down" size={11} /></PlainButton>
                <MenuBar $ml={4}><MenuButton>视图</MenuButton><MenuButton>标记</MenuButton></MenuBar>
            </TimelinePart>
            <TimelinePart $pr={24}>
                <Group>
                    <Tool $tone="grey" aria-label="自动插帧"><Icon name="record" /></Tool>
                    <Tool $width={19} aria-label="插帧选项"><Icon name="down" size={10} color="#484848" /></Tool>
                </Group>
                <Group $ml={8}>
                    {["first", "prevKey", "playBack", "play", "nextKey", "last"].map(item =>
                        <Tool key={item} $tone="grey" $width={22} aria-label={item}><Icon name={item} size={14} color="#e6e6e6" /></Tool>
                    )}
                </Group>
            </TimelinePart>
            <TimelinePart $end $pr={11}>
                <TimeField $width={80}><input aria-label="当前帧" defaultValue="1" /></TimeField>
                <Group $ml={6}>
                    <Tool $tone="grey" $width={22} aria-label="预览范围"><Icon name="stopwatch" color="#e6e6e6" /></Tool>
                    <TimeField $width={94} $flat>起始<input defaultValue="1" /></TimeField>
                    <TimeField $width={94} $ml={1} $flat>结束<input defaultValue="250" /></TimeField>
                </Group>
                <TimeField $width={86} $ml={7}><input aria-label="步长" defaultValue="1" /></TimeField>
                <Tool $tone="grey" $width={37} $ml={7} $round>[</Tool>
                <Tool $tone="grey" $width={37} $ml={6} $round>]</Tool>
            </TimelinePart>
        </TimelineHeader>
    </Area>

/* ---------- outliner ---------- */

const OutlinerRow = styled.div`
    display: flex;
    align-items: center;
    height: 22px;
    padding: 0 11px 0 ${p => p.$pad}px;
    color: ${p => p.$color || "#d0d0d0"};
    background: ${p => p.$active ? "#334d80" : p.$odd ? "#2b2b2b" : "transparent"};
`;

const RowIcon = styled.span`
    display: flex;
    align-items: center;
    justify-content: center;
    width: 21px;
    height: 20px;
    margin: 0 ${p => p.$mr || 0}px 0 ${p => p.$ml || 0}px;
    border-radius: 4px;
    background: ${p => p.$bg || "transparent"};
`;

const RowTools = styled.span`
    display: flex;
    align-items: center;
    gap: 6px;
    margin-left: auto;
    color: #e0e0e0;

    input {
        appearance: none;
        width: 12px;
        height: 12px;
        margin: 0 2px 0 0;
        background: #e0e0e0;
        border-radius: 1px;
        display: grid;
        place-items: center;
    }
    input::after {
        content: "";
        width: 5px;
        height: 8px;
        margin-top: -2px;
        border: solid #222;
        border-width: 0 2px 2px 0;
        transform: rotate(40deg);
    }
`;

const Outliner = () =>
    <Area $bg="#282828">
        <AreaHeader $height={27} $bg="#282828">
            <EditorButton icon="tree" label="编辑器类型" />
            <EditorButton icon="layers" label="显示模式" width={34} ml={6} />
            <SearchBox $ml={17}><Icon name="search" /><input placeholder="搜索" aria-label="搜索大纲" /></SearchBox>
            <Spacer />
            <EditorButton icon="funnel" label="过滤" width={34} />
            <Tool $tone="grey" $ml={6} $round aria-label="新建集合"><Icon name="newCollection" /></Tool>
        </AreaHeader>
        <OutlinerRow $pad={21} $color="#fff"><RowIcon $bg="#4a4a4a" $mr={5}><Icon name="collection" /></RowIcon>场景集合</OutlinerRow>
        <OutlinerRow $pad={43} $odd>
            <RowIcon $mr={5}><Icon name="collection" /></RowIcon>集合 1
            <RowTools><input type="checkbox" defaultChecked aria-label="集合 1" /><Icon name="eye" /><Icon name="photo" /></RowTools>
        </OutlinerRow>
        <OutlinerRow $pad={25}>
            <Icon name="right" size={14} />
            <RowIcon $ml={4} $mr={5}><Icon name="movie" color="#d5824a" /></RowIcon>Camera
            <RowIcon $ml={24} $bg="#4a4a4a"><Icon name="movieLine" color="#21b57c" /></RowIcon>
            <RowTools><Icon name="eye" /><Icon name="photo" /></RowTools>
        </OutlinerRow>
        <OutlinerRow $pad={25} $active $color="#eeb05c">
            <Icon name="right" size={14} color="#d0d0d0" />
            <RowIcon $ml={4} $mr={5} $bg="#5b6684"><Icon name="triangle" color="#e8924f" /></RowIcon>Plane
            <RowIcon $ml={24}><Icon name="wrenchLine" color="#6b86e0" /></RowIcon>
            <RowIcon><Icon name="mesh" color="#1fc8a0" /></RowIcon>
            <RowTools><Icon name="eye" /><Icon name="photo" /></RowTools>
        </OutlinerRow>
        {[0, 1, 2, 3, 4, 5, 6, 7].map(i => <OutlinerRow key={i} $odd={i % 2 === 1} />)}
    </Area>

/* ---------- properties ---------- */

const PropsBody = styled.div`
    flex: 1;
    min-height: 0;
    display: flex;
    padding-left: 2px;
`;

const TabColumn = styled.div`
    width: 28px;
    padding-top: 6px;
    background: #1d1d1d;
    flex: none;
`;

const PropTab = styled(PlainButton)`
    width: 28px;
    height: ${p => p.$active ? 34 : 30}px;
    margin-bottom: ${p => p.$active ? 5 : p.$wide ? 9 : 0}px;
    background: ${p => p.$active ? "#303030" : "transparent"};
    border-radius: 4px 0 0 4px;
`;

const propTabs = [
    ["tools", "#d0d0d0"], ["render", "#b5b5b5"], ["output", "#b5b5b5"], ["layers", "#b5b5b5"], ["scene", "#b5b5b5"], ["world", "#c4516b"],
    ["objProp", "#e0914f"], ["wrench", "#6b86e0"], ["particles", "#6b86e0"], ["physics", "#6b86e0"], ["constraint", "#6b86e0"], ["mesh", "#1fc98a"], ["material", "#c4516b"],
];

const PropsContent = styled.div`
    flex: 1;
    padding: 5px 8px;
`;

const ToolName = styled.div`
    display: flex;
    align-items: center;
    gap: 8px;
    margin: 0 0 9px 7px;
`;

const Panel = styled.div`
    margin-top: ${p => p.$mt}px;
    border-radius: 4px;
    background: #353535;
    overflow: hidden;
`;

const PanelHead = styled.div`
    display: flex;
    align-items: center;
    gap: 4px;
    height: ${p => p.$height}px;
    padding: 0 9px 1px ${p => p.$sub ? 21 : 6}px;
    background: #3d3d3d;
`;

const Fields = styled.div`
    display: grid;
    grid-template-columns: 39% 1fr;
    column-gap: 10px;
    padding: 10px 0 8px;
    line-height: 22px;

    > span { text-align: right; }
`;

const CheckList = styled.div`
    label { display: flex; align-items: center; gap: 4px; height: 22px; }
    input {
        appearance: none;
        width: 14px;
        height: 14px;
        margin: 0;
        border-radius: 3px;
        background: #545454;
    }
`;

const GripDots = styled.svg`
    width: 13px;
    height: 8px;
    margin-left: auto;
    fill: #8a8a8a;
`;

const Grip = () =>
    <GripDots>
        {[0, 3, 6, 9, 12].map(x => [1, 5].map(y => <rect key={`${x}${y}`} x={x} y={y} width="1" height="1" />))}
    </GripDots>

const Properties = () =>
    <Area>
        <AreaHeader>
            <EditorButton icon="props" label="编辑器类型" />
            <SearchBox $ml={60}><Icon name="search" /><input placeholder="搜索" aria-label="搜索属性" /></SearchBox>
            <Spacer />
            <Tool $round aria-label="选项"><Icon name="down" size={12} /></Tool>
        </AreaHeader>
        <PropsBody>
            <TabColumn>
                {propTabs.map(([name, color], i) =>
                    <PropTab key={name} $active={i === 0} $wide={i === 5} aria-label={name}><Icon name={name} color={color} /></PropTab>
                )}
            </TabColumn>
            <PropsContent>
                <ToolName><SelectTool $size={26} aria-label="框选"><Icon name="arrow" /></SelectTool>框选</ToolName>
                <SelectModes ml={0} />
                <Panel $mt={10}>
                    <PanelHead $height={30}><Icon name="down" size={14} />选项<Grip /></PanelHead>
                    <PanelHead $height={23} $sub><Icon name="down" size={14} />变换</PanelHead>
                    <Fields>
                        <span>仅影响</span>
                        <CheckList>
                            {["原点", "位置", "父级"].map(item => <label key={item}><input type="checkbox" />{item}</label>)}
                        </CheckList>
                    </Fields>
                </Panel>
                <Panel $mt={2}><PanelHead $height={28}><Icon name="right" size={14} />工作区<Grip /></PanelHead></Panel>
            </PropsContent>
        </PropsBody>
    </Area>

/* ---------- overlays ---------- */

const Card = styled.article`
    position: absolute;
    left: 893px;
    top: 321px;
    width: 583px;
    padding: 10px 27px 0;
    background: #fff;
    box-shadow: 0 0 10px 2px rgba(160, 160, 160, 0.45);
    color: #222;
    font-family: "Noto Sans", "Noto Sans CJK SC", sans-serif;
    font-size: 18px;
    line-height: 29px;

    h1 { margin: 0; font-size: 26px; line-height: 36px; color: #000; }
    p { margin: 13px 0 15px; }
    dl { margin: 0; display: grid; grid-template-columns: 136px 1fr; }
    dt { font-weight: 700; color: #000; }
    dd { margin: 0; white-space: nowrap; }
`;

const terms = [
    ["浮点:", "单个浮点数值，通常用于权重或强度值。"],
    ["布尔:", "二进制条件的真值或假值。"],
    ["整数:", "32 位整数，用于索引号或离散值。"],
    ["矢量:", "包含浮点数值的三维矢量，通常表示方向或位置。"],
    ["颜色:", "采用 32 位浮点数值的 RGBA 颜色。"],
];

const Caption = styled.div`
    position: absolute;
    right: 12px;
    bottom: 9px;
    font-size: 55px;
    font-weight: 500;
    line-height: 60px;
    color: #fff;
    -webkit-text-stroke: 5px #000;
    paint-order: stroke fill;
`;

const Watermark = styled.div`
    position: absolute;
    left: 12px;
    bottom: 13px;
    display: flex;
    align-items: center;
    gap: 13px;
    height: 38px;
    font-size: 34px;
    font-weight: 700;
    color: #aaa;
    opacity: 0.35;
    filter: blur(1px);
    pointer-events: none;
`;

const StatusBar = styled.footer`
    display: flex;
    align-items: center;
    height: 25px;
    padding: 0 14px 0 8px;
    gap: 10px;
    color: #8a8a8a;

    span { display: flex; align-items: center; gap: 3px; }
`;

const App = () => {
    const [tab, setTab] = useState("几何节点")
    const tabs = ["布局", "合成", "着色", "动画", "渲染", "几何节点", "脚本", "UV", "3视图", "资产浏览", "建模"]
    return <Screen>
        <GlobalStyle />
        <TitleBar>
            <Icon name="blenderColor" color="#e8892f" />
            * (未保存) - Blender 4.4.3
            <WindowButtons>
                <PlainButton aria-label="最小化"><svg width="16" height="16" stroke="#fff" fill="none"><path d="M3 8.500h10" /></svg></PlainButton>
                <PlainButton aria-label="还原"><svg width="16" height="16" stroke="#fff" fill="none"><rect x="3.500" y="5.500" width="7" height="7" rx="1" /><path d="M6 3.500h5q1.500 0 1.500 1.500v5" /></svg></PlainButton>
                <PlainButton aria-label="关闭"><svg width="16" height="16" stroke="#fff" fill="none"><path d="M3 3l10 10M13 3L3 13" /></svg></PlainButton>
            </WindowButtons>
        </TitleBar>
        <TopBar>
            <MenuBar>
                <Icon name="blender" size={20} />
                {["文件", "编辑", "渲染", "窗口", "帮助"].map(item => <MenuButton key={item}>{item}</MenuButton>)}
            </MenuBar>
            <Tabs>
                {tabs.map(item => <Tab key={item} $active={item === tab} onClick={() => setTab(item)}>{item}</Tab>)}
            </Tabs>
            <PlainButton $margin="5px 0 0 10px" aria-label="添加工作区">
                <svg width="12" height="12" stroke="#989898"><path d="M6 0v12M0 6h12" /></svg>
            </PlainButton>
            <LangButton>EN</LangButton>
            <Spacer />
            <IdBlock>
                <Tool $width={34} aria-label="浏览场景"><Icon name="scene" /><Icon name="down" size={11} /></Tool>
                <IdField $width={109}><input aria-label="场景名称" defaultValue="Scene" /><Icon name="pin" color="#666" /></IdField>
                <Tool $tone="grey" aria-label="新建场景"><Icon name="copy" /></Tool>
                <Tool $tone="dim" aria-label="删除场景"><Icon name="close" size={12} /></Tool>
            </IdBlock>
            <IdBlock $ml={6}>
                <Tool $width={34} aria-label="浏览视图层"><Icon name="layers" /><Icon name="down" size={11} /></Tool>
                <IdField $width={87}><input aria-label="视图层名称" defaultValue="ViewLayer" /></IdField>
                <Tool $tone="grey" aria-label="新建视图层"><Icon name="copy" /></Tool>
                <Tool $tone="dim" $width={23} aria-label="删除视图层"><Icon name="close" size={12} /></Tool>
            </IdBlock>
        </TopBar>
        <Workspace>
            <Rows $rows="minmax(0, 476fr) minmax(0, 494fr) 26px">
                <UpperRow><Viewport /><Spreadsheet /></UpperRow>
                <NodeEditor />
                <Timeline />
            </Rows>
            <Rows $rows="minmax(0, 296fr) minmax(0, 703fr)">
                <Outliner />
                <Properties />
            </Rows>
        </Workspace>
        <StatusBar>
            <span><Icon name="mouseLeft" />选择</span>
            <span><Icon name="mouseMid" />平移视图</span>
            <span><Icon name="mouseRight" />选项</span>
            <Spacer />
            内存: 67.5 MiB | 显存: 2.1/4.0 GiB | 4.4.3
        </StatusBar>
        <Watermark>
            <svg width="37" height="37" viewBox="0 0 37 37">
                <rect width="37" height="37" rx="6" fill="#bbb" />
                <path d="M10 12h17v14H10zM14 12v14M10 19h17" stroke="#444" strokeWidth="3" fill="none" />
            </svg>
            tafe.cc
        </Watermark>
        <Card>
            <h1>属性数据类型</h1>
            <p>属性的类型是指存储在每个元素的数据种类。</p>
            <dl>
                {terms.map(([name, text]) => <React.Fragment key={name}><dt>{name}</dt><dd>{text}</dd></React.Fragment>)}
            </dl>
        </Card>
        <Caption>数据类型</Caption>
    </Screen>
}

export default App;
